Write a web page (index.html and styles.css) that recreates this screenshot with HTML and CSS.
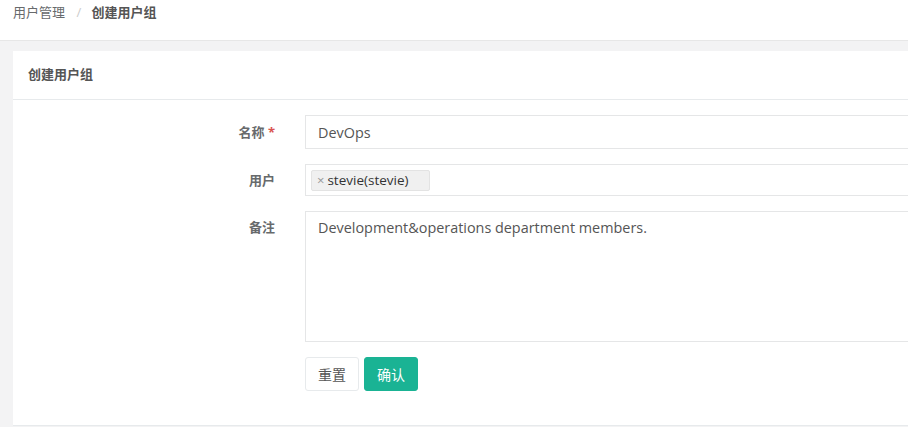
FILE: index.html
```html
<!DOCTYPE html>
<html lang="zh">
<head>
<meta charset="utf-8">
<title>创建用户组</title>
<link rel="stylesheet" href="styles.css">
</head>
<body>
<div class="topbar">
  <span class="crumb">用户管理</span>
  <span class="sep">/</span>
  <span class="crumb active">创建用户组</span>
</div>
<div class="main">
  <div class="card">
    <div class="card-header">创建用户组</div>
    <div class="card-body">
      <div class="row">
        <label class="label">名称 <span class="req">*</span></label>
        <div class="control input h34">DevOps</div>
      </div>
      <div class="row">
        <label class="label">用户</label>
        <div class="control input h32 tags">
          <span class="tag"><span class="x">×</span>stevie(stevie)</span>
        </div>
      </div>
      <div class="row">
        <label class="label top">备注</label>
        <div class="control textarea">Development&amp;operations department members.</div>
      </div>
      <div class="row">
        <div></div>
        <div class="actions">
          <button class="btn btn-default">重置</button>
          <button class="btn btn-primary">确认</button>
        </div>
      </div>
    </div>
  </div>
</div>
</body>
</html>
```

FILE: styles.css
```css
html, body {
  margin: 0;
  padding: 0;
  background: #f3f3f4;
  overflow: hidden;
}
body {
  font-family: "Open Sans", "Noto Sans CJK SC", sans-serif;
  font-size: 13px;
  color: #676a6c;
  width: 908px;
  height: 427px;
}
.topbar {
  height: 41px;
  box-sizing: border-box;
  background: #fff;
  border-bottom: 1px solid #e7e7e7;
  padding-left: 13px;
  line-height: 25px;
  white-space: nowrap;
}
.crumb { color: #676a6c; }
.crumb.active { font-weight: bold; color: #555; }
.sep { color: #ccc; margin: 0 7px 0 8px; }
.main {
  padding: 10px 0 0 13px;
}
.card {
  background: #fff;
  border-bottom: 1px solid #e7eaec;
}
.card-header {
  height: 48px;
  line-height: 46px;
  padding-left: 15px;
  font-weight: bold;
  color: #555;
  border-bottom: 1px solid #e7eaec;
}
.card-body {
  padding: 15px 0 34px 0;
  display: flex;
  flex-direction: column;
  gap: 15px;
}
.row {
  display: grid;
  grid-template-columns: 262px 1fr;
  column-gap: 30px;
  align-items: center;
}
.label {
  text-align: right;
  font-weight: bold;
  color: #676a6c;
  line-height: 20px;
}
.label.top {
  align-self: start;
  padding-top: 6px;
}
.req { color: #d9534f; }
.control {
  box-sizing: border-box;
  border: 1px solid #e5e6e7;
  border-right: none;
  background: #fff;
  font-size: 14.4px;
  color: #555;
}
.input {
  padding: 0 12px;
  display: flex;
  align-items: center;
}
.h34 { height: 34px; }
.h32 { height: 32px; }
.tags { padding-left: 5px; }
.tag {
  display: inline-flex;
  align-items: center;
  height: 21px;
  box-sizing: border-box;
  padding: 0 20px 0 5px;
  background: #f0f0f0;
  border: 1px solid #e3e3e3;
  border-radius: 2px;
  font-size: 13.5px;
  color: #333;
}
.tag .x {
  color: #999;
  margin-right: 3px;
  font-size: 13px;
}
.textarea {
  height: 131px;
  padding: 6px 12px;
  line-height: 20px;
}
.actions {
  display: flex;
  gap: 5px;
}
.btn {
  box-sizing: border-box;
  height: 34px;
  width: 54px;
  border-radius: 3px;
  font-family: "Noto Sans CJK SC", sans-serif;
  font-size: 14px;
  padding: 0;
  cursor: pointer;
}
.btn-default {
  background: #fff;
  border: 1px solid #e7eaec;
  color: #555;
}
.btn-primary {
  background: #1ab394;
  border: 1px solid #1ab394;
  color: #fff;
}
```
